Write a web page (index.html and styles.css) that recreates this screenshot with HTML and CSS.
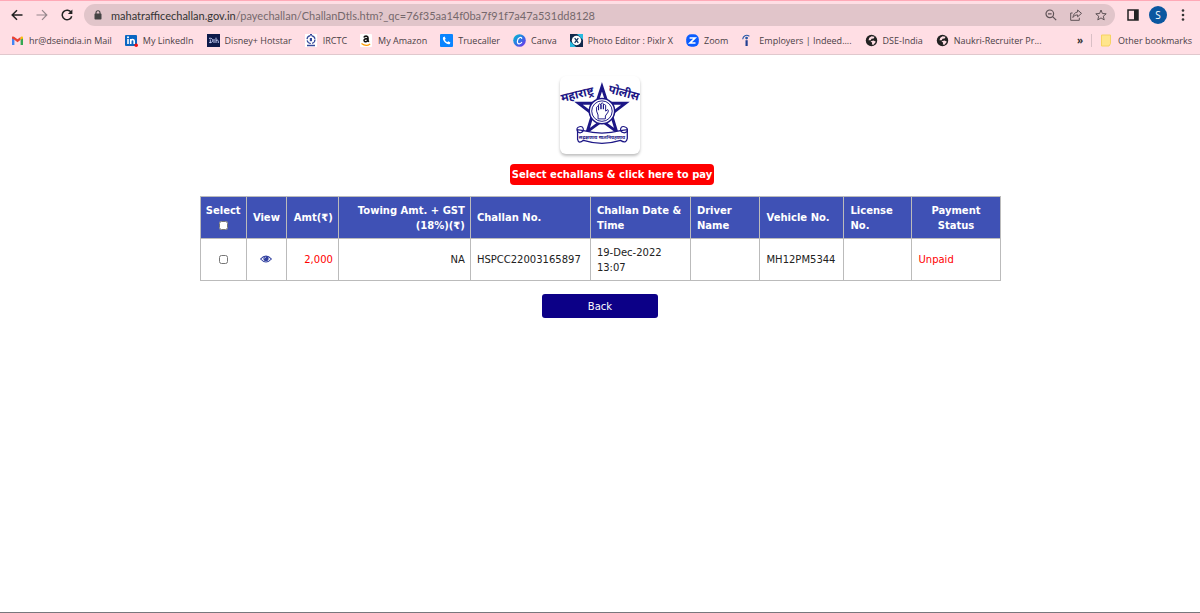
FILE: index.html
```
<!DOCTYPE html>
<html lang="en">
<head>
    <meta charset="UTF-8">
    <meta name="viewport" content="width=device-width, initial-scale=1.0">
    <title>Challan Details</title>
    <link rel="stylesheet" href="styles.css">
</head>
<body>

    <header class="browser">
        <div class="toolbar">
            <div class="nav">
                <button class="icon-btn" aria-label="Back one page">
                    <svg width="12" height="12" viewBox="0 0 12 12" fill="none" stroke="#222" stroke-width="1.5"><path d="M11.5 6H1.5M6 1.2L1.2 6L6 10.8"/></svg>
                </button>
                <button class="icon-btn" aria-label="Forward">
                    <svg width="12" height="12" viewBox="0 0 12 12" fill="none" stroke="#96868b" stroke-width="1.2"><path d="M.5 6H10.5M6 1.2L10.8 6L6 10.8"/></svg>
                </button>
                <button class="icon-btn" aria-label="Reload">
                    <svg width="12" height="12" viewBox="0 0 12 12"><path d="M10.2 3.6A4.8 4.8 0 1 0 10.7 7.2" fill="none" stroke="#222" stroke-width="1.5"/><path d="M11.4 .5V5H6.9Z" fill="#222"/></svg>
                </button>
            </div>
            <div class="address">
                <svg width="8" height="10" viewBox="0 0 8 10"><path d="M2 4V2.8a2 2 0 0 1 4 0V4" fill="none" stroke="#444" stroke-width="1.1"/><rect x=".5" y="3.6" width="7" height="6" rx=".8" fill="#444"/></svg>
                <div class="url"><span class="host">mahatrafficechallan.gov.in</span>/payechallan/ChallanDtls.htm?_qc=76f35aa14f0ba7f91f7a47a531dd8128</div>
                <button class="icon-btn" aria-label="Zoom">
                    <svg width="12" height="12" viewBox="0 0 12 12" fill="none" stroke="#5e5256" stroke-width="1.2"><circle cx="4.8" cy="4.8" r="3.8"/><path d="M3 4.8H6.6M7.6 7.6L11.2 11.2"/></svg>
                </button>
                <button class="icon-btn" aria-label="Share">
                    <svg width="12" height="12" viewBox="0 0 12 12" fill="none" stroke="#5e5256"><path d="M2.6 4H.7V11.3H9.3V8.8"/><path d="M7.6 1L11.5 4.4L7.6 7.8V5.9C5.3 5.9 4 6.8 2.9 8.5C3.3 5.4 4.8 3.3 7.6 3Z"/></svg>
                </button>
                <button class="icon-btn" aria-label="Bookmark this page">
                    <svg width="12" height="12" viewBox="0 0 12 12" fill="none" stroke="#5e5256"><path d="M6 1L7.4 4.5L11.2 4.8L8.3 7.2L9.2 10.9L6 8.9L2.8 10.9L3.7 7.2L.8 4.8L4.6 4.5Z"/></svg>
                </button>
            </div>
            <div class="actions">
                <button class="icon-btn" aria-label="Side panel">
                    <svg width="12" height="12" viewBox="0 0 12 12"><rect x="1" y="1" width="10" height="10" fill="none" stroke="#222" stroke-width="1.5"/><path d="M7 1H11V11H7Z" fill="#222"/></svg>
                </button>
                <button class="avatar">S</button>
                <button class="icon-btn" aria-label="Menu">
                    <svg width="12" height="12" viewBox="0 0 12 12" fill="#333"><circle cx="6" cy="1.5" r="1.3"/><circle cx="6" cy="6" r="1.3"/><circle cx="6" cy="10.5" r="1.3"/></svg>
                </button>
            </div>
        </div>

        <nav class="bookmarks">
            <a href="#">
                <svg width="13" height="13" viewBox="0 0 13 13"><path d="M1 3.5V11H3.4V5.2Z" fill="#4285f4"/><path d="M12 3.5V11H9.6V5.2Z" fill="#34a853"/><path d="M1 3.6L1.6 2.2L3.4 2.9L6.5 5.3L9.6 2.9V5.8L6.5 8.2L3.4 5.8L1 4.6Z" fill="#ea4335"/><path d="M9.6 5.8V2.9L11.2 2.2L12 3.4V4.4Z" fill="#fbbc04"/></svg>
                hr@dseindia.in Mail
            </a>
            <a href="#">
                <svg width="13" height="13" viewBox="0 0 13 13"><rect y="1" width="12" height="11" rx="1" fill="#0a66c2"/><path d="M3 5V10M5.7 10V5M5.7 7.4C5.7 5 9.2 4.7 9.2 7.4V10" fill="none" stroke="#fff" stroke-width="1.6"/><circle cx="3" cy="3.2" r="1" fill="#fff"/><circle cx="11.2" cy="11.2" r="1.8" fill="#e11"/></svg>
                My LinkedIn
            </a>
            <a href="#">
                <svg width="13" height="13" viewBox="0 0 13 13"><rect width="13" height="13" fill="#0d1a4a"/><path d="M2 4.3C4.5 4 6 5 5.7 6.7C5.5 8.5 3.5 9 2.2 8.5M3.3 5.5V9M7 5V9M9 3.7V9M9 6.7C10 5.7 11.3 6 11.3 7.3V9" fill="none" stroke="#cfd8ff" stroke-width=".9"/></svg>
                Disney+ Hotstar
            </a>
            <a href="#">
                <svg width="13" height="13" viewBox="0 0 13 13"><rect width="12" height="13" fill="#fff"/><circle cx="6" cy="5.5" r="4" fill="none" stroke="#34499a" stroke-width="1.2" stroke-dasharray="5 1.3"/><path d="M4.8 4H7V7.2H4.8Z" fill="#34499a"/><path d="M2 11.5H10M5 .8H7" stroke="#34499a" stroke-width="1.4"/></svg>
                IRCTC
            </a>
            <a href="#">
                <svg width="13" height="13" viewBox="0 0 13 13"><rect width="12" height="13" rx="1" fill="#fff"/><path d="M3.9 3.5C4.5 1.6 8 1.6 8 3.7V6.8L8.8 7.9M8 4.6C5.5 4.5 3.9 5.2 4.1 6.7C4.4 8.4 7.3 8 8 5.8" fill="none" stroke="#111" stroke-width="1.6"/><path d="M1.5 9.5Q6 13 10.2 10" fill="none" stroke="#f90" stroke-width="1.1"/></svg>
                My Amazon
            </a>
            <a href="#">
                <svg width="13" height="13" viewBox="0 0 13 13"><rect width="13" height="13" rx="1" fill="#0a84ff"/><path d="M3.1 3.2L4.6 2.6L5.7 4.8L4.8 5.7C5.4 6.9 6.1 7.6 7.3 8.2L8.2 7.3L10.4 8.4L9.8 9.9C7 11.3 1.7 6 3.1 3.2Z" fill="#fff"/></svg>
                Truecaller
            </a>
            <a href="#">
                <svg width="13" height="13" viewBox="0 0 13 13"><defs><linearGradient id="canva" x1="0" y1="0" x2="1" y2="1"><stop offset="0" stop-color="#00c4cc"/><stop offset=".5" stop-color="#2e74e5"/><stop offset="1" stop-color="#7d2ae8"/></linearGradient></defs><circle cx="6.5" cy="6.5" r="6.3" fill="url(#canva)"/><path d="M8.6 4.9C9 3.5 7.7 2.9 6.4 3.7C4 5.1 3.6 9.6 6 9.8C7.2 9.9 8.2 9.2 8.9 8" fill="none" stroke="#fff" stroke-width="1.2"/></svg>
                Canva
            </a>
            <a href="#">
                <svg width="13" height="13" viewBox="0 0 13 13"><rect width="13" height="13" fill="#12294c"/><path d="M7 0H13V6Z" fill="#27b9df"/><path d="M0 7V13H6Z" fill="#27b9df"/><circle cx="6.5" cy="6.5" r="4.7" fill="#fff"/><path d="M4.7 4.2L8.3 8.8M8.3 4.2L4.7 8.8" stroke="#12345e" stroke-width="1.3"/></svg>
                Photo Editor : Pixlr X
            </a>
            <a href="#">
                <svg width="13" height="13" viewBox="0 0 13 13"><rect x=".2" y=".2" width="12.6" height="12.6" rx="5" fill="#0b5cff"/><path d="M3.6 4H9L4 9H9.5" fill="none" stroke="#fff" stroke-width="1.7"/></svg>
                Zoom
            </a>
            <a href="#">
                <svg width="13" height="13" viewBox="0 0 13 13"><circle cx="5.6" cy="4.1" r="1.4" fill="#2557a7"/><path d="M4.5 6.2H6.7V12H4.5Z" fill="#213f91"/><path d="M1.7 5.2C2 1.7 5.2 .2 8.4 2.2" fill="none" stroke="#2557a7" stroke-width="1.1"/></svg>
                Employers | Indeed....
            </a>
            <a href="#">
                <svg width="13" height="13" viewBox="0 0 13 13"><circle cx="6.5" cy="6.5" r="5.7" fill="#222"/><path d="M6.5 2.3L9.5 2.8L8.7 4.6L6.5 4.8L5.8 6.2H3.5L4.3 3.7Z" fill="#ffdee4"/><path d="M5.5 7.2L8.6 6.5L10.9 7.7L8.5 10.8L6.8 10.5L7.2 8.7Z" fill="#ffdee4"/></svg>
                DSE-India
            </a>
            <a href="#">
                <svg width="13" height="13" viewBox="0 0 13 13"><circle cx="6.5" cy="6.5" r="5.7" fill="#222"/><path d="M6.5 2.3L9.5 2.8L8.7 4.6L6.5 4.8L5.8 6.2H3.5L4.3 3.7Z" fill="#ffdee4"/><path d="M5.5 7.2L8.6 6.5L10.9 7.7L8.5 10.8L6.8 10.5L7.2 8.7Z" fill="#ffdee4"/></svg>
                Naukri-Recruiter Pr...
            </a>
            <div class="bookmarks-end">
                <button class="more">»</button>
                <a href="#" class="other">
                    <svg width="13" height="13" viewBox="0 0 13 13"><path d="M1.5 1H10.5V9.5L9 12H1.5Z" fill="#ffe58c" stroke="#f6d362"/></svg>
                    Other bookmarks
                </a>
            </div>
        </nav>
    </header>

    <main class="page">
        <svg class="logo" width="80" height="78" viewBox="0 0 82 80" role="img" aria-label="Maharashtra Police">
            <g fill="none" stroke="#1d1786">
                <path d="M43 11L48.5 28H67L52.5 39L58 57L43 46L28 57L33.5 39L19 28H37.5Z" stroke-width="3"/>
                <circle cx="43" cy="36" r="13" fill="#fff" stroke-width="1.5"/>
                <circle cx="43" cy="36" r="10.5" stroke-width="1"/>
                <path d="M39 44V40L37.5 36V32Q38.5 30 39.5 32V35V29.5Q40.7 27.5 42 29.5V34V28.5Q43.2 26.5 44.5 28.5V34V30Q45.6 28.5 46.8 30V36L49 34.5Q50 35 49.3 37L46.5 41V44Z" stroke-width="1"/>
                <path d="M18 55V65Q19 70 24 66Q43 72 62 66Q68 70 69 64V55L62 56Q43 61 24 56Z" fill="#fff" stroke-width="1.3"/>
                <path d="M24 56Q24 51 20 52Q16 53 18 57Q21 60 24 56M62 56Q62 51 66 52Q70 53 69 57Q65 60 62 56" stroke-width="1.2"/>
            </g>
            <text class="logo-name" x="2" y="27" transform="rotate(-14 2 27)">महाराष्ट्र</text>
            <text class="logo-name" x="49" y="17" transform="rotate(15 49 17)">पोलीस</text>
            <text class="logo-motto" x="43" y="65" text-anchor="middle">सद्रक्षणाय खलनिग्रहणाय</text>
        </svg>

        <button class="pay">Select echallans &amp; click here to pay</button>

        <table class="challans">
            <colgroup>
                <col class="c-select">
                <col class="c-view">
                <col class="c-amt">
                <col class="c-towing">
                <col class="c-challan">
                <col class="c-date">
                <col class="c-driver">
                <col class="c-vehicle">
                <col class="c-license">
                <col class="c-status">
            </colgroup>
            <thead>
                <tr>
                    <th class="center"><label for="selectAll">Select</label><input type="checkbox" id="selectAll"></th>
                    <th class="center">View</th>
                    <th class="right">Amt(₹)</th>
                    <th class="right">Towing Amt. + GST (18%)(₹)</th>
                    <th>Challan No.</th>
                    <th>Challan Date &amp; Time</th>
                    <th>Driver Name</th>
                    <th>Vehicle No.</th>
                    <th>License No.</th>
                    <th class="center">Payment Status</th>
                </tr>
            </thead>
            <tbody>
                <tr>
                    <td class="center"><input type="checkbox" aria-label="Select HSPCC22003165897"></td>
                    <td class="center">
                        <button class="view-btn" aria-label="View challan">
                            <svg width="12" height="8" viewBox="0 0 12 8"><path d="M.6 4Q6-2 11.4 4Q6 10 .6 4Z" fill="#fff" stroke="#303f9f" stroke-width="1.1"/><circle cx="6" cy="3.6" r="2.6" fill="#303f9f"/><path d="M4.5 3.5Q4.6 2.2 6 2.1" fill="none" stroke="#fff" stroke-width=".6"/></svg>
                        </button>
                    </td>
                    <td class="right red">2,000</td>
                    <td class="right">NA</td>
                    <td>HSPCC22003165897</td>
                    <td>19-Dec-2022 13:07</td>
                    <td></td>
                    <td>MH12PM5344</td>
                    <td></td>
                    <td class="red">Unpaid</td>
                </tr>
            </tbody>
        </table>

        <button class="back">Back</button>
    </main>

</body>
</html>
```
FILE: styles.css
```
* {
    box-sizing: border-box;
}

body {
    margin: 0;
    min-height: 100vh;
    display: flex;
    flex-direction: column;
    background-color: #fff;
    border-bottom: 1px solid #77777c;
    font-family: Verdana, 'DejaVu Sans', sans-serif;
    font-size: 10px;
    color: #222;
}

button {
    font-family: inherit;
    border: none;
    cursor: pointer;
}

svg {
    display: block;
    flex-shrink: 0;
}

/* browser bar */
.browser {
    background-color: #ffdee4;
    border-top: 1px solid #ffa9b7;
    border-bottom: 1px solid #e0c8cd;
    font-family: 'Segoe UI', 'Open Sans', sans-serif;
    color: #4a4044;
}

.toolbar {
    display: flex;
    align-items: center;
    padding: 3px 11px 0;
}

.nav {
    display: flex;
    gap: 13px;
    margin-right: 11px;
}

.icon-btn {
    display: flex;
    padding: 0;
    background: none;
}

.address {
    flex: 1;
    display: flex;
    align-items: center;
    gap: 13px;
    height: 22px;
    padding: 0 8px 0 10px;
    border-radius: 11px;
    background-color: #e1c5ca;
}

.url {
    flex: 1;
    margin-left: -4px;
    font-family: 'Segoe UI', Lato, sans-serif;
    font-size: 11px;
    white-space: nowrap;
    overflow: hidden;
    color: #75686c;
}

.host {
    color: #333;
}

.actions {
    display: flex;
    align-items: center;
    gap: 10px;
    margin-left: 12px;
}

.avatar {
    width: 18px;
    height: 18px;
    padding: 0;
    border-radius: 50%;
    background-color: #0b57a0;
    color: #fff;
    font-size: 10px;
}

.bookmarks {
    display: flex;
    align-items: center;
    gap: 13px;
    height: 28px;
    padding: 0 8px 0 11px;
    font-size: 9px;
    white-space: nowrap;
}

.bookmarks a {
    display: flex;
    align-items: center;
    gap: 5px;
    color: inherit;
    text-decoration: none;
}

.bookmarks-end {
    display: flex;
    align-items: center;
    gap: 8px;
    margin-left: auto;
}

.more {
    padding: 0;
    background: none;
    font-size: 10px;
    font-weight: bold;
    color: #333;
}

.bookmarks .other {
    padding-left: 8px;
    border-left: 1px solid #d9bfc5;
}

/* page */
.page {
    display: flex;
    flex-direction: column;
    align-items: center;
    padding-top: 21px;
}

.logo {
    border-radius: 6px;
    background-color: #fff;
    box-shadow: 0 2px 3px rgba(0, 0, 0, 0.25);
}

.logo-name {
    font-family: 'Noto Sans Devanagari', 'Noto Sans', sans-serif;
    font-size: 12px;
    font-weight: bold;
    fill: #1d1786;
}

.logo-motto {
    font-family: 'Noto Sans Devanagari', 'Noto Sans', sans-serif;
    font-size: 5px;
    font-weight: bold;
    fill: #1d1786;
}

.pay {
    height: 21px;
    margin: 10px 0 11px 24px;
    padding: 0 2px;
    border-radius: 4px;
    background-color: #f00;
    color: #fff;
    font-size: 10px;
    font-weight: bold;
}

.challans {
    width: 66.75%;
    table-layout: fixed;
    border-collapse: collapse;
    line-height: 15px;
}

.challans th,
.challans td {
    height: 42px;
    padding: 5px 5px 5px 6px;
    border: 1px solid #bbb;
    text-align: left;
}

.challans th {
    background-color: #3f51b5;
    color: #fff;
}

.challans .center {
    padding: 5px;
    text-align: center;
}

.challans .right {
    text-align: right;
}

.challans .red {
    color: #f00;
}

.challans label {
    display: block;
}

.challans input {
    display: block;
    width: 9px;
    height: 9px;
    margin: 3px auto;
}

.c-select { width: 5.8%; }
.c-view { width: 5%; }
.c-amt { width: 6.5%; }
.c-towing { width: 16.5%; }
.c-challan { width: 15%; }
.c-date { width: 12.5%; }
.c-driver { width: 8.7%; }
.c-vehicle { width: 10.5%; }
.c-license { width: 8.5%; }
.c-status { width: 11%; }

.view-btn {
    padding: 0;
    background: none;
}

.back {
    width: 116px;
    height: 24px;
    margin-top: 13px;
    border-radius: 3px;
    background-color: #0c0087;
    color: #fff;
    font-size: 10px;
}
```
